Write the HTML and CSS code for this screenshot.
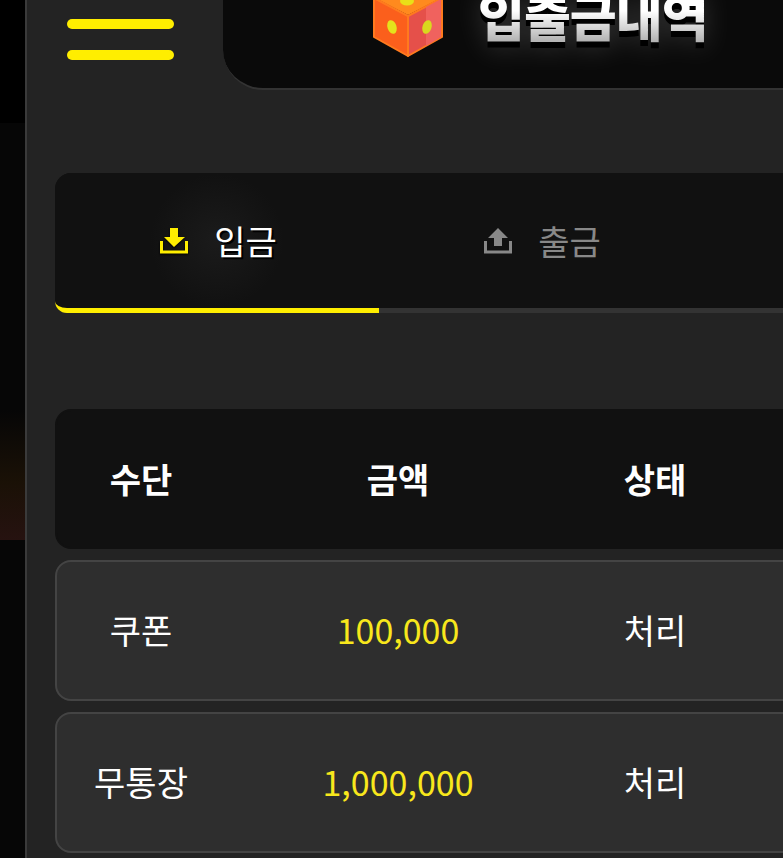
FILE: index.html
```html
<!DOCTYPE html>
<html lang="ko">
<head>
    <meta charset="UTF-8">
    <meta name="viewport" content="width=device-width, initial-scale=1.0">
    <title>입출금내역</title>
    <link rel="stylesheet" href="styles.css">
</head>
<body>
    <div class="side-strip">
        <div class="strip-top"></div>
        <div class="strip-glow"></div>
    </div>

    <main class="panel">
        <header class="top-bar">
            <button class="menu-btn" aria-label="menu">
                <span></span>
                <span></span>
            </button>
            <div class="title-box">
                <div class="title-inner">
                    <svg class="dice" viewBox="0 0 72 64" width="72" height="64">
                        <!-- top face, cut off by the window -->
                        <polygon points="36,-14 71,4 36,22 1,4" fill="#ff8a1e"/>
                        <polygon points="2,5 36,23 36,63 2,44" fill="#fb5f1c" stroke="#ff7a1e" stroke-width="2" stroke-linejoin="round"/>
                        <polygon points="36,23 70,5 70,44 36,63" fill="#e5504a" stroke="#ff7a1e" stroke-width="2" stroke-linejoin="round"/>
                        <polygon points="54,14 69,6 69,44 54,53" fill="#f0625e"/>
                        <ellipse cx="35" cy="8" rx="7" ry="4.5" fill="#e9e018"/>
                        <ellipse cx="20" cy="34" rx="4.5" ry="7" fill="#e4e21c" transform="rotate(-18 20 34)"/>
                        <ellipse cx="55" cy="34" rx="4.5" ry="7" fill="#d9d91e" transform="rotate(18 55 34)"/>
                    </svg>
                    <h1 class="title">입출금내역</h1>
                </div>
            </div>
        </header>

        <nav class="tabs">
            <a class="tab active">
                <svg class="tab-icon" viewBox="0 0 30 30" width="30" height="30">
                    <path d="M11 2h8v9h7L15 21 5 11h6z" fill="currentColor"/>
                    <path d="M2.5 15v11h25V15" fill="none" stroke="currentColor" stroke-width="3"/>
                </svg>
                <span>입금</span>
            </a>
            <a class="tab">
                <svg class="tab-icon" viewBox="0 0 30 30" width="30" height="30">
                    <path d="M11 20h8v-8h6L15 2 5 12h6z" fill="currentColor"/>
                    <path d="M2.5 15v11h25V15" fill="none" stroke="currentColor" stroke-width="3"/>
                </svg>
                <span>출금</span>
            </a>
        </nav>

        <section class="list">
            <div class="row head">
                <div>수단</div>
                <div>금액</div>
                <div>상태</div>
            </div>
            <div class="row">
                <div>쿠폰</div>
                <div class="amount">100,000</div>
                <div>처리</div>
            </div>
            <div class="row">
                <div>무통장</div>
                <div class="amount">1,000,000</div>
                <div>처리</div>
            </div>
        </section>
    </main>
</body>
</html>
```

FILE: styles.css
```css
html, body {
    height: 100%;
}

body {
    margin: 0;
    height: 858px;
    overflow: hidden;
    display: flex;
    background: #000;
    color: #fff;
    font-family: "Noto Sans CJK KR", "Noto Sans", sans-serif;
}

.side-strip {
    flex: 0 0 25px;
    background: #060606;
}

.strip-top {
    height: 123px;
    margin-bottom: 287px;
    background: #000;
}

.strip-glow {
    height: 130px;
    background: linear-gradient(to bottom, #060606, #1a1106 55%, #261210);
}

.panel {
    flex: 0 0 758px;
    width: 758px;
    overflow: hidden;
    background: #232323;
    border-left: 2px solid #3a3a3a;
    box-sizing: border-box;
}

/* top */
.top-bar {
    display: flex;
    align-items: flex-end;
    height: 90px;
}

.menu-btn {
    flex: 0 0 107px;
    display: flex;
    flex-direction: column;
    gap: 21px;
    align-self: flex-start;
    margin: 19px 0 0 40px;
    padding: 0;
    background: none;
    border: none;
}

.menu-btn span {
    display: block;
    height: 10px;
    border-radius: 5px;
    background: #ffee00;
}

.title-box {
    flex: 0 0 800px;
    height: 90px;
    margin-left: 49px;
    box-sizing: border-box;
    background: #0a0a0a;
    border-bottom: 2px solid #333;
    border-bottom-left-radius: 40px;
    overflow: hidden;
}

.title-inner {
    display: flex;
    align-items: center;
    gap: 35px;
    margin: -7px 0 0 149px;
    height: 64px;
}

.dice {
    flex: none;
    filter: blur(0.7px);
}

.title {
    margin: -21px 0 0 -1px;
    font-size: 51px;
    font-weight: 900;
    line-height: 80px;
    letter-spacing: -1px;
    color: transparent;
    background: linear-gradient(to bottom, #fff 45%, #b4b4b4 82%);
    -webkit-background-clip: text;
    background-clip: text;
    filter: drop-shadow(0 6px 0 #000) drop-shadow(0 0 14px rgba(255, 255, 255, 0.16));
}

/* tabs */
.tabs {
    display: flex;
    width: 972px;
    height: 140px;
    margin: 83px 0 0 28px;
    box-sizing: border-box;
    background: #111;
    border-bottom: 5px solid #333;
    border-radius: 16px 16px 0 12px;
}

.tab {
    flex: 0 0 324px;
    display: flex;
    align-items: center;
    justify-content: center;
    gap: 25px;
    height: 140px;
    box-sizing: border-box;
    padding: 0 0 5px 2px;
    font-size: 34px;
    color: #888;
}

.tab.active {
    color: #fff;
    padding-bottom: 0;
    border-bottom: 5px solid #ffee00;
    border-radius: 16px 0 0 12px;
    background: radial-gradient(circle at center, #1b1b1b, #111 38%);
    text-shadow: 2px 2px 0 #000;
}

.tab.active .tab-icon {
    color: #ffee00;
    filter: drop-shadow(0 1px 1px #000);
}

.tab span {
    line-height: 1;
}

/* table */
.list {
    display: flex;
    flex-direction: column;
    gap: 11px;
    width: 1000px;
    margin: 96px 0 0 28px;
}

.row {
    display: grid;
    grid-template-columns: 168px 168px 168px;
    column-gap: 89px;
    align-items: center;
    height: 141px;
    padding-bottom: 2px;
    box-sizing: border-box;
    text-align: center;
    font-size: 34px;
    background: #2e2e2e;
    border: 2px solid #444;
    border-radius: 16px;
}

.row.head {
    height: 140px;
    background: #111;
    border-color: #111;
    font-weight: 700;
}

.amount {
    color: #f8e71c;
}
```
